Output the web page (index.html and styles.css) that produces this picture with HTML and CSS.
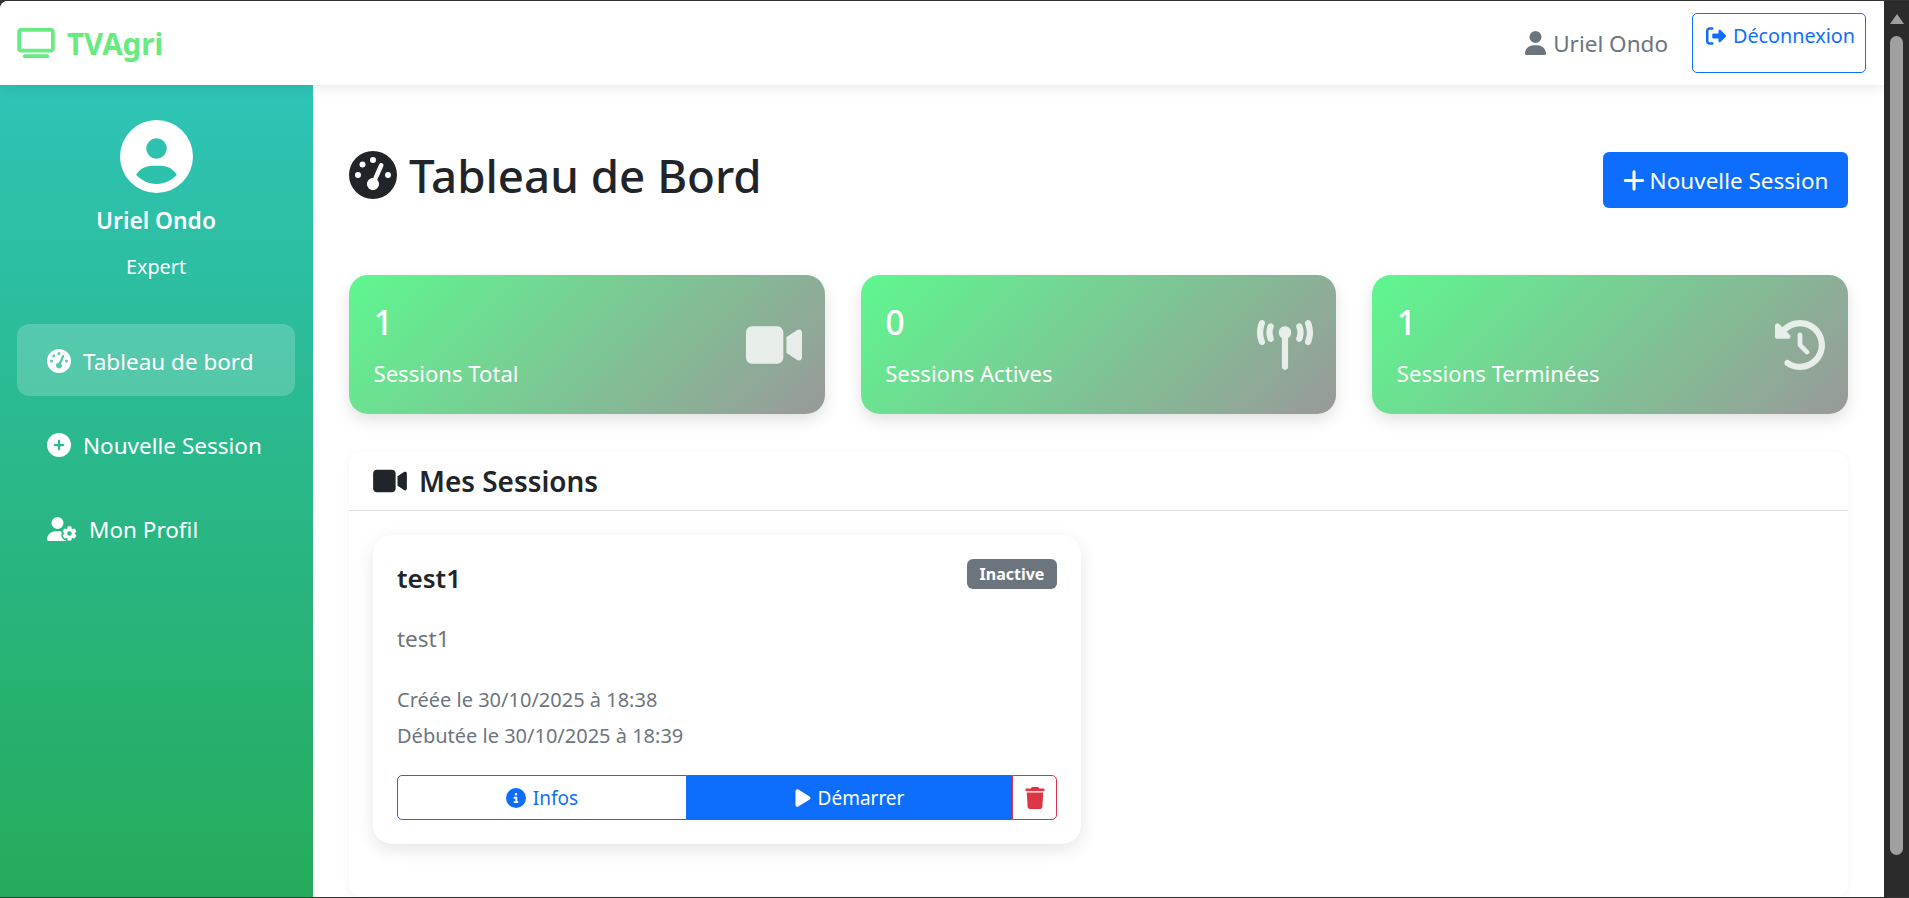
FILE: index.html
```html
<!DOCTYPE html>
<html lang="fr">
<head>
    <meta charset="UTF-8">
    <meta name="viewport" content="width=device-width, initial-scale=1.0">
    <title>TVAgri - Tableau de Bord</title>
    <link rel="stylesheet" href="styles.css">
</head>
<body>
    <svg class="sprite" aria-hidden="true">
        <symbol id="i-tv" viewBox="0 0 640 512"><path d="M64 64V352H576V64H64zM0 64C0 28.7 28.7 0 64 0H576c35.3 0 64 28.7 64 64V352c0 35.3-28.7 64-64 64H64c-35.3 0-64-28.7-64-64V64zM128 448H512c17.7 0 32 14.3 32 32s-14.3 32-32 32H128c-17.7 0-32-14.3-32-32s14.3-32 32-32z"/></symbol>
        <symbol id="i-user" viewBox="0 0 448 512"><path d="M224 256A128 128 0 1 0 224 0a128 128 0 1 0 0 256zm-45.7 48C79.8 304 0 383.8 0 482.3C0 498.7 13.3 512 29.7 512H418.3c16.4 0 29.7-13.3 29.7-29.7C448 383.8 368.2 304 269.7 304H178.3z"/></symbol>
        <symbol id="i-logout" viewBox="0 0 512 512"><path d="M377.9 105.9L500.7 228.7c7.2 7.2 11.3 17.1 11.3 27.3s-4.1 20.1-11.3 27.3L377.9 406.1c-6.4 6.4-15 9.9-24 9.9c-18.7 0-33.9-15.2-33.9-33.9l0-62.1-128 0c-17.7 0-32-14.3-32-32l0-64c0-17.7 14.3-32 32-32l128 0 0-62.1c0-18.7 15.2-33.9 33.9-33.9c9 0 17.6 3.6 24 9.9zM160 96L96 96c-17.7 0-32 14.3-32 32l0 256c0 17.7 14.3 32 32 32l64 0c17.7 0 32 14.3 32 32s-14.3 32-32 32l-64 0c-53 0-96-43-96-96L0 128C0 75 43 32 96 32l64 0c17.7 0 32 14.3 32 32s-14.3 32-32 32z"/></symbol>
        <symbol id="i-avatar" viewBox="0 0 512 512"><path d="M399 384.2C376.9 345.8 335.4 320 288 320H224c-47.4 0-88.9 25.8-111 64.2c35.2 39.2 86.2 63.8 143 63.8s107.8-24.7 143-63.8zM0 256a256 256 0 1 1 512 0A256 256 0 1 1 0 256zm256 16a72 72 0 1 0 0-144 72 72 0 1 0 0 144z"/></symbol>
        <symbol id="i-gauge" viewBox="0 0 512 512"><path d="M0 256a256 256 0 1 1 512 0A256 256 0 1 1 0 256zM288 96a32 32 0 1 0 -64 0 32 32 0 1 0 64 0zM256 416c35.3 0 64-28.7 64-64c0-17.4-6.9-33.1-18.1-44.6L366 161.7c5.3-12.1-.2-26.3-12.3-31.6s-26.3 .2-31.6 12.3L257.9 288c-.6 0-1.3 0-1.9 0c-35.3 0-64 28.7-64 64s28.7 64 64 64zM176 144a32 32 0 1 0 -64 0 32 32 0 1 0 64 0zM96 288a32 32 0 1 0 0-64 32 32 0 1 0 0 64zm352-32a32 32 0 1 0 -64 0 32 32 0 1 0 64 0z"/></symbol>
        <symbol id="i-circle-plus" viewBox="0 0 512 512"><path d="M256 512A256 256 0 1 0 256 0a256 256 0 1 0 0 512zM232 344V280H168c-13.3 0-24-10.7-24-24s10.7-24 24-24h64V168c0-13.3 10.7-24 24-24s24 10.7 24 24v64h64c13.3 0 24 10.7 24 24s-10.7 24-24 24H280v64c0 13.3-10.7 24-24 24s-24-10.7-24-24z"/></symbol>
        <symbol id="i-user-gear" viewBox="0 0 640 512"><path d="M224 0a128 128 0 1 1 0 256A128 128 0 1 1 224 0zM178.3 304h91.4c11.8 0 23.4 1.2 34.5 3.3c-2.1 18.5 7.4 35.6 21.8 44.8c-16.6 10.6-26.7 31.6-20 53.3c4 12.9 9.4 25.5 16.4 37.6s15.2 23.1 24.4 33c15.7 16.9 39.6 18.4 57.2 8.7v.9c0 9.2 2.7 18.5 7.9 26.3H29.7C13.3 512 0 498.7 0 482.3C0 383.8 79.8 304 178.3 304zM436 218.2c0-7 4.5-13.3 11.3-14.8c10.5-2.4 21.5-3.7 32.7-3.7s22.2 1.3 32.7 3.7c6.8 1.5 11.3 7.8 11.3 14.8v30.6c7.9 3.4 15.4 7.7 22.3 12.8l24.9-14.3c6.1-3.5 13.7-2.7 18.5 2.4c7.6 8.1 14.3 17.2 20.1 27.2s10.3 20.4 13.5 31c2.1 6.7-1.1 13.7-7.2 17.2l-25 14.4c.4 4 .7 8.1 .7 12.3s-.2 8.2-.7 12.3l25 14.4c6.1 3.5 9.2 10.5 7.2 17.2c-3.3 10.6-7.8 21-13.5 31s-12.5 19.1-20.1 27.2c-4.8 5.1-12.5 5.9-18.5 2.4l-24.9-14.3c-6.9 5.1-14.3 9.4-22.3 12.8l0 30.6c0 7-4.5 13.3-11.3 14.8c-10.5 2.4-21.5 3.7-32.7 3.7s-22.2-1.3-32.7-3.7c-6.8-1.5-11.3-7.8-11.3-14.8V454.8c-8-3.4-15.6-7.7-22.5-12.9l-24.7 14.3c-6.1 3.5-13.7 2.7-18.5-2.4c-7.6-8.1-14.3-17.2-20.1-27.2s-10.3-20.4-13.5-31c-2.1-6.7 1.1-13.7 7.2-17.2l24.8-14.3c-.4-4.1-.7-8.2-.7-12.4s.3-8.3 .7-12.4L343.8 325c-6.1-3.5-9.2-10.5-7.2-17.2c3.3-10.6 7.7-21 13.5-31s12.5-19.1 20.1-27.2c4.8-5.1 12.4-5.9 18.5-2.4l24.8 14.3c6.9-5.1 14.5-9.4 22.5-12.9V218.2zm92.1 133.5a48.1 48.1 0 1 0 -96.1 0 48.1 48.1 0 1 0 96.1 0z"/></symbol>
        <symbol id="i-plus" viewBox="0 0 448 512"><path d="M256 80c0-17.7-14.3-32-32-32s-32 14.3-32 32V224H48c-17.7 0-32 14.3-32 32s14.3 32 32 32H192V432c0 17.7 14.3 32 32 32s32-14.3 32-32V288H400c17.7 0 32-14.3 32-32s-14.3-32-32-32H256V80z"/></symbol>
        <symbol id="i-video" viewBox="0 0 576 512"><path d="M0 128C0 92.7 28.7 64 64 64H320c35.3 0 64 28.7 64 64V384c0 35.3-28.7 64-64 64H64c-35.3 0-64-28.7-64-64V128zM559.1 99.8c10.4 5.6 16.9 16.4 16.9 28.2V384c0 11.8-6.5 22.6-16.9 28.2s-23 5-32.9-1.6l-96-64L416 337.1V320 192 174.9l14.2-9.5 96-64c9.8-6.5 22.4-7.2 32.9-1.6z"/></symbol>
        <symbol id="i-tower" viewBox="0 0 576 512"><path d="M80.3 44C69.8 69.9 64 98.2 64 128s5.8 58.1 16.3 84c6.6 16.4-1.3 35-17.7 41.7s-35-1.3-41.7-17.7C7.4 202.6 0 166.1 0 128S7.4 53.4 20.9 20C27.6 3.6 46.2-4.3 62.6 2.3S86.9 27.6 80.3 44zM555.1 20C568.6 53.4 576 89.9 576 128s-7.4 74.6-20.9 108c-6.6 16.4-25.3 24.3-41.7 17.7S489.1 228.4 495.7 212c10.5-25.9 16.3-54.2 16.3-84s-5.8-58.1-16.3-84C489.1 27.6 497 9 513.4 2.3s35 1.3 41.7 17.7zM352 128c0 23.7-12.9 44.4-32 55.4V480c0 17.7-14.3 32-32 32s-32-14.3-32-32V183.4c-19.1-11.1-32-31.7-32-55.4c0-35.3 28.7-64 64-64s64 28.7 64 64zM170.6 76.8C163.8 92.4 160 109.7 160 128s3.8 35.6 10.6 51.2c7.1 16.2-.3 35.1-16.5 42.1s-35.1-.3-42.1-16.5c-10.3-23.6-16-49.6-16-76.8s5.7-53.2 16-76.8c7.1-16.2 25.9-23.6 42.1-16.5s23.6 25.9 16.5 42.1zM464 51.2c10.3 23.6 16 49.6 16 76.8s-5.7 53.2-16 76.8c-7.1 16.2-25.9 23.6-42.1 16.5s-23.6-25.9-16.5-42.1c6.8-15.6 10.6-32.9 10.6-51.2s-3.8-35.6-10.6-51.2c-7.1-16.2 .3-35.1 16.5-42.1s35.1 .3 42.1 16.5z"/></symbol>
        <symbol id="i-history" viewBox="0 0 512 512"><path d="M75 75L41 41C25.9 25.9 0 36.6 0 57.9V168c0 13.3 10.7 24 24 24H134.1c21.4 0 32.1-25.9 17-41l-30.8-30.8C155 85.5 203 64 256 64c106 0 192 86 192 192s-86 192-192 192c-40.8 0-78.6-12.7-109.7-34.4c-14.5-10.1-34.4-6.6-44.6 7.9s-6.6 34.4 7.9 44.6C151.2 495 201.7 512 256 512c141.4 0 256-114.6 256-256S397.4 0 256 0C185.3 0 121.3 28.7 75 75zm181 53c-13.3 0-24 10.7-24 24V256c0 6.4 2.5 12.5 7 17l72 72c9.4 9.4 24.6 9.4 33.9 0s9.4-24.6 0-33.9l-65-65V152c0-13.3-10.7-24-24-24z"/></symbol>
        <symbol id="i-info" viewBox="0 0 512 512"><path d="M256 512A256 256 0 1 0 256 0a256 256 0 1 0 0 512zM216 336h24V272H216c-13.3 0-24-10.7-24-24s10.7-24 24-24h48c13.3 0 24 10.7 24 24v88h8c13.3 0 24 10.7 24 24s-10.7 24-24 24H216c-13.3 0-24-10.7-24-24s10.7-24 24-24zm40-208a32 32 0 1 1 0 64 32 32 0 1 1 0-64z"/></symbol>
        <symbol id="i-play" viewBox="0 0 384 512"><path d="M73 39c-14.8-9.1-33.4-9.4-48.5-.9S0 62.6 0 80V432c0 17.4 9.4 33.4 24.5 41.9s33.7 8.1 48.5-.9L361 297c14.3-8.7 23-24.2 23-41s-8.7-32.2-23-41L73 39z"/></symbol>
        <symbol id="i-trash" viewBox="0 0 448 512"><path d="M135.2 17.7L128 32H32C14.3 32 0 46.3 0 64S14.3 96 32 96H416c17.7 0 32-14.3 32-32s-14.3-32-32-32H320l-7.2-14.3C307.4 6.8 296.3 0 284.2 0H163.8c-12.1 0-23.2 6.8-28.6 17.7zM416 128H32L53.2 467c1.6 25.3 22.6 45 47.9 45H346.9c25.3 0 46.3-19.7 47.9-45L416 128z"/></symbol>
    </svg>

    <div class="window">
        <div class="app">
            <nav class="navbar">
                <a class="brand" href="#">
                    <svg class="brand-icon"><use href="#i-tv"/></svg>
                    <span>TVAgri</span>
                </a>
                <div class="nav-right">
                    <span class="nav-user">
                        <svg class="nav-user-icon"><use href="#i-user"/></svg>
                        Uriel Ondo
                    </span>
                    <a class="btn-logout" href="#">
                        <svg class="logout-icon"><use href="#i-logout"/></svg>
                        Déconnexion
                    </a>
                </div>
            </nav>

            <div class="layout">
                <aside class="sidebar">
                    <div class="profile">
                        <svg class="avatar"><use href="#i-avatar"/></svg>
                        <div class="profile-name">Uriel Ondo</div>
                        <div class="profile-role">Expert</div>
                    </div>
                    <ul class="side-nav">
                        <li class="side-item active">
                            <svg class="side-icon"><use href="#i-gauge"/></svg>
                            Tableau de bord
                        </li>
                        <li class="side-item">
                            <svg class="side-icon"><use href="#i-circle-plus"/></svg>
                            Nouvelle Session
                        </li>
                        <li class="side-item">
                            <svg class="side-icon wide"><use href="#i-user-gear"/></svg>
                            Mon Profil
                        </li>
                    </ul>
                </aside>

                <main class="main">
                    <div class="page-head">
                        <h1>
                            <svg class="h1-icon"><use href="#i-gauge"/></svg>
                            Tableau de Bord
                        </h1>
                        <a class="btn-new" href="#">
                            <svg class="plus-icon"><use href="#i-plus"/></svg>
                            Nouvelle Session
                        </a>
                    </div>

                    <div class="stats">
                        <div class="stat">
                            <div>
                                <div class="stat-value">1</div>
                                <div class="stat-label">Sessions Total</div>
                            </div>
                            <svg class="stat-icon"><use href="#i-video"/></svg>
                        </div>
                        <div class="stat">
                            <div>
                                <div class="stat-value">0</div>
                                <div class="stat-label">Sessions Actives</div>
                            </div>
                            <svg class="stat-icon"><use href="#i-tower"/></svg>
                        </div>
                        <div class="stat">
                            <div>
                                <div class="stat-value">1</div>
                                <div class="stat-label">Sessions Terminées</div>
                            </div>
                            <svg class="stat-icon round"><use href="#i-history"/></svg>
                        </div>
                    </div>

                    <section class="panel">
                        <div class="panel-head">
                            <svg class="panel-icon"><use href="#i-video"/></svg>
                            <h2>Mes Sessions</h2>
                        </div>
                        <div class="panel-body">
                            <div class="session">
                                <div class="session-top">
                                    <h3>test1</h3>
                                    <span class="badge">Inactive</span>
                                </div>
                                <p class="session-desc">test1</p>
                                <p class="session-date">Créée le 30/10/2025 à 18:38</p>
                                <p class="session-date">Débutée le 30/10/2025 à 18:39</p>
                                <div class="session-actions">
                                    <a class="act act-info" href="#">
                                        <svg class="act-icon"><use href="#i-info"/></svg>
                                        Infos
                                    </a>
                                    <a class="act act-start" href="#">
                                        <svg class="act-icon play"><use href="#i-play"/></svg>
                                        Démarrer
                                    </a>
                                    <a class="act act-del" href="#">
                                        <svg class="trash-icon"><use href="#i-trash"/></svg>
                                    </a>
                                </div>
                            </div>
                        </div>
                    </section>
                </main>
            </div>
        </div>

        <div class="scrollbar">
            <span class="scroll-arrow"></span>
            <span class="scroll-thumb"></span>
        </div>
    </div>
</body>
</html>
```

FILE: styles.css
```css
* {
    box-sizing: border-box;
}
html, body {
    height: 100%;
}
body {
    margin: 0;
    background-color: #333;
    font-family: "Noto Sans", "Open Sans", sans-serif;
    font-size: 22.5px;
    color: #212529;
    overflow: hidden;
}
a {
    text-decoration: none;
}
svg {
    fill: currentColor;
    flex: none;
}
.sprite {
    display: none;
}

.window {
    display: flex;
    height: 100%;
    padding: 1px 0 1px;
}
.app {
    flex: 1;
    min-width: 0;
    display: flex;
    flex-direction: column;
    background-color: #fff;
    border-top-left-radius: 8px;
    overflow: hidden;
}

/* navbar */
.navbar {
    height: 84px;
    flex: none;
    display: flex;
    justify-content: space-between;
    align-items: center;
    padding: 0 18px 0 17px;
    background-color: #fff;
    box-shadow: 0 2px 12px rgba(0, 0, 0, 0.1);
    position: relative;
    z-index: 2;
}
.brand {
    display: flex;
    align-items: center;
    gap: 12px;
    color: #67eb80;
    font-size: 29.6px;
    font-weight: 700;
}
.brand-icon {
    width: 38px;
    height: 30px;
}
.nav-right {
    display: flex;
    align-items: center;
    gap: 24px;
}
.nav-user {
    display: flex;
    align-items: center;
    gap: 7px;
    color: #6c757d;
}
.nav-user-icon {
    width: 21px;
    height: 24px;
}
.btn-logout {
    display: flex;
    align-items: flex-start;
    gap: 7px;
    width: 174px;
    height: 60px;
    padding: 8px 0 0 13px;
    border: 1px solid #0d6efd;
    border-radius: 5px;
    color: #0d6efd;
    font-size: 19.8px;
}
.logout-icon {
    width: 20px;
    height: 20px;
    margin-top: 4px;
}

/* sidebar */
.layout {
    flex: 1;
    min-height: 0;
    display: flex;
}
.sidebar {
    width: 313px;
    flex: none;
    padding: 35px 18px 0 17px;
    background: linear-gradient(180deg, #2ec4b6, #25ab5a);
    color: #fff;
}
.profile {
    display: flex;
    flex-direction: column;
    align-items: center;
}
.avatar {
    width: 73px;
    height: 73px;
}
.profile-name {
    margin-top: 13px;
    font-size: 22.8px;
    line-height: 30px;
    font-weight: 600;
}
.profile-role {
    margin-top: 18px;
    font-size: 19.8px;
    line-height: 26px;
}
.side-nav {
    list-style: none;
    margin: 44px 0 0;
    padding: 0;
    display: flex;
    flex-direction: column;
    gap: 12px;
}
.side-item {
    height: 72px;
    display: flex;
    align-items: center;
    gap: 12px;
    padding: 2px 0 0 30px;
    border-radius: 12px;
}
.side-item.active {
    background-color: rgba(255, 255, 255, 0.2);
}
.side-icon {
    width: 24px;
    height: 24px;
}
.side-icon.wide {
    width: 30px;
}

/* main content */
.main {
    flex: 1;
    min-width: 0;
    display: flex;
    flex-direction: column;
    padding: 60px 36px 0;
}
.page-head {
    height: 63px;
    margin-bottom: 67px;
    display: flex;
    justify-content: space-between;
    align-items: flex-start;
}
h1 {
    margin: 0;
    display: flex;
    align-items: center;
    gap: 12px;
    font-size: 45.7px;
    line-height: 60px;
    font-weight: 500;
}
.h1-icon {
    width: 48px;
    height: 48px;
}
.btn-new {
    align-self: flex-end;
    width: 245px;
    height: 56px;
    display: flex;
    align-items: center;
    justify-content: center;
    gap: 5px;
    border-radius: 6px;
    background-color: #0d6efd;
    color: #fff;
}
.plus-icon {
    width: 22px;
    height: 25px;
}

.stats {
    display: grid;
    grid-template-columns: repeat(3, 1fr);
    gap: 36px;
    margin-bottom: 38px;
}
.stat {
    height: 139px;
    display: flex;
    justify-content: space-between;
    align-items: center;
    padding: 0 23px 2px 24.5px;
    border-radius: 19px;
    background: linear-gradient(135deg, #5ef78f, #999);
    box-shadow: 0 6px 16px rgba(0, 0, 0, 0.12);
    color: #fff;
}
.stat-value {
    font-size: 34px;
    line-height: 44px;
    font-weight: 500;
}
.stat-label {
    margin-top: 14px;
    font-size: 22.1px;
    line-height: 30px;
}
.stat-icon {
    width: 56px;
    height: 50px;
    margin-top: 2px;
    opacity: 0.8;
}
.stat-icon.round {
    width: 50px;
}

.panel {
    flex: 1;
    margin-bottom: 1px;
    border-radius: 12px;
    background-color: #fff;
    box-shadow: 0 2px 10px rgba(0, 0, 0, 0.05);
}
.panel-head {
    height: 59px;
    display: flex;
    align-items: center;
    gap: 12px;
    padding-left: 24px;
    border-bottom: 1px solid #dfdfdf;
}
.panel-icon {
    width: 34px;
    height: 30px;
}
h2 {
    margin: 0;
    font-size: 27.9px;
    font-weight: 600;
}
.panel-body {
    padding: 24px;
}
.session {
    width: 708px;
    height: 309px;
    padding: 24px;
    border-radius: 19px;
    background-color: #fff;
    box-shadow: 0 6px 18px rgba(0, 0, 0, 0.1);
}
.session-top {
    display: flex;
    justify-content: space-between;
    align-items: flex-start;
    height: 65px;
}
h3 {
    margin: 4px 0 0;
    font-size: 26px;
    line-height: 30px;
    font-weight: 600;
}
.badge {
    width: 90px;
    height: 30px;
    display: flex;
    align-items: center;
    justify-content: center;
    border-radius: 6px;
    background-color: #6c757d;
    color: #fff;
    font-size: 16px;
    font-weight: 700;
}
.session-desc {
    margin: 0 0 28px;
    line-height: 30px;
    color: #6c757d;
}
.session-date {
    margin: 0;
    height: 36px;
    line-height: 36px;
    font-size: 20px;
    color: #6c757d;
}
.session-actions {
    display: flex;
    margin-top: 21px;
    height: 45px;
    font-size: 19px;
}
.act {
    display: flex;
    align-items: center;
    justify-content: center;
    gap: 7px;
    padding-top: 1px;
    border: 1px solid #0d6efd;
}
.act-info {
    width: 290px;
    flex: none;
    color: #0d6efd;
    border-radius: 5px 0 0 5px;
}
.act-start {
    width: 325px;
    flex: none;
    background-color: #0d6efd;
    color: #fff;
}
.act-del {
    width: 45px;
    flex: none;
    border-color: #dc3545;
    border-radius: 0 5px 5px 0;
    color: #dc3545;
}
.act-icon {
    width: 20px;
    height: 20px;
}
.act-icon.play {
    width: 16px;
}
.trash-icon {
    width: 20px;
    height: 22px;
}

/* window scrollbar */
.scrollbar {
    width: 25px;
    flex: none;
    display: flex;
    flex-direction: column;
    align-items: center;
    padding-top: 13px;
    background-color: #2b2b2b;
}
.scroll-arrow {
    width: 0;
    height: 0;
    border-left: 7px solid transparent;
    border-right: 7px solid transparent;
    border-bottom: 10px solid #a0a0a0;
}
.scroll-thumb {
    width: 13px;
    height: 819px;
    margin-top: 12px;
    border-radius: 7px;
    background-color: #a0a0a0;
}
```
